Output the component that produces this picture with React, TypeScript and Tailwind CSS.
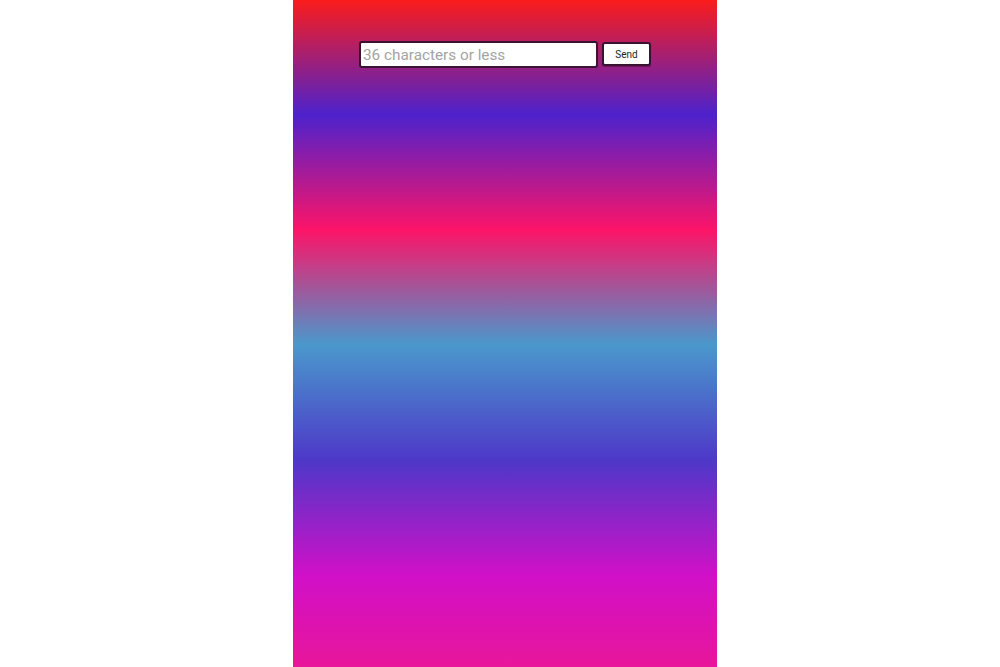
export default function App() {
  return (
    <div className="w-full h-[667px] bg-white flex justify-center pl-[10px]">
      <div className="w-[424px] h-full bg-[linear-gradient(to_bottom,#fa1c1c_0%,#4d22cc_17.2%,#fc1468_34.5%,#4a98cc_51.7%,#4d38c8_69%,#d010c8_86.2%,#e8169a_100%)] pt-[41px]">
        <div className="flex items-start justify-center gap-[4px]">
          <input
            type="text"
            maxLength={36}
            placeholder="36 characters or less"
            className="w-[239px] h-[27px] bg-white border-2 border-[#3a1232] rounded-[3px] px-[2px] text-[15.3px] text-gray-800 placeholder:text-[#a4a4a4] outline-none font-['Roboto',sans-serif]"
          />
          <button
            type="button"
            className="w-[49px] h-[24px] mt-[1px] bg-white border-2 border-[#3a1232] rounded-[3px] text-[10px] text-[#222] font-['Roboto',sans-serif] shadow-[0_1px_1px_rgba(0,0,0,0.3)]"
          >
            Send
          </button>
        </div>
      </div>
    </div>
  )
}
